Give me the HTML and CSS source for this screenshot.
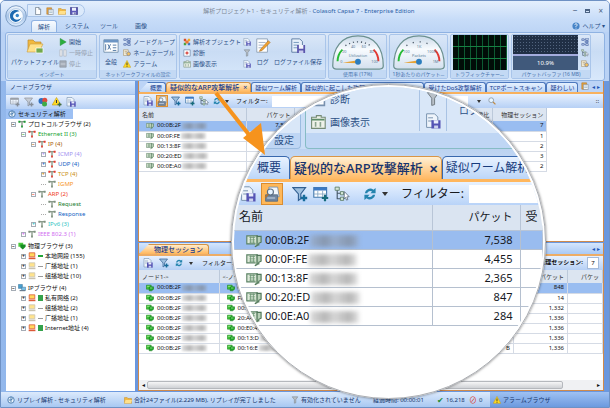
FILE: index.html
```html
<!DOCTYPE html>
<html lang="ja">
<head>
<meta charset="utf-8">
<title>解析プロジェクト1 - セキュリティ解析 - Colasoft Capsa 7</title>
<link rel="stylesheet" href="styles.css">
</head>
<body>
<svg class="defs" aria-hidden="true">
  <defs>
    <linearGradient id="dial" x1="0" y1="0" x2="0" y2="1"><stop offset="0" stop-color="#c9d9e8"/><stop offset=".4" stop-color="#f8fbfe"/><stop offset="1" stop-color="#d3e0ee"/></linearGradient>
    <linearGradient id="orb" x1="0" y1="0" x2="0" y2="1"><stop offset="0" stop-color="#f4f9ff"/><stop offset=".5" stop-color="#a9c6ea"/><stop offset="1" stop-color="#dcecff"/></linearGradient>
  </defs>
  <symbol id="doc" viewBox="0 0 10 10"><path d="M2 .5h4l2.300 2.500v6.500H2z" fill="#fff" stroke="#567" stroke-width=".8"/><path d="M6 .5V3h2.300" fill="none" stroke="#567" stroke-width=".7"/></symbol>
  <symbol id="clip" viewBox="0 0 10 10"><path d="M1 1h6v8H1z" fill="#e8a43c" stroke="#a86a1c" stroke-width=".6"/><path d="M3 3h6v6.500H3z" fill="#f5f8fc" stroke="#678" stroke-width=".6"/><path d="M4 5h4M4 7h4" stroke="#79a" stroke-width=".7"/></symbol>
  <symbol id="folder" viewBox="0 0 10 10"><path d="M.5 2h3.500l1 1.200h4.500v6H.5z" fill="#f2ba45" stroke="#c08824" stroke-width=".6"/><path d="M.5 9.200 2 5h8L8.800 9.200z" fill="#ffe08b"/></symbol>
  <symbol id="save" viewBox="0 0 10 10"><path d="M.5.5h9v9h-9z" fill="#5b58b8" stroke="#35357c" stroke-width=".8"/><path d="M2.500.8h5v4h-5z" fill="#edf1fb"/><path d="M3 6.500h4.500v3H3z" fill="#d5daf0"/><path d="M5.600 7h1.200v2H5.600z" fill="#35357c"/></symbol>
  <symbol id="savedoc" viewBox="0 0 10 10"><path d="M1 .5h5l2 2v6.500H1z" fill="#eef4fb" stroke="#7690ad" stroke-width=".6"/><path d="M2 3h3M2 5h3" stroke="#7690ad" stroke-width=".6"/><path d="M4 4.500h5.700v5.200H4z" fill="#5554b4"/><path d="M5.500 4.500h2.800v2H5.500z" fill="#e9edfb"/><path d="M5.700 7.800h2.500v1.900H5.700z" fill="#cdd3ee"/></symbol>
  <symbol id="find" viewBox="0 0 10 10"><path d="M3 .7h5.500l1 6H4z" fill="#f4f8fc" stroke="#6d88a4" stroke-width=".5"/><path d="M1 5.500h7.500v4H1z" fill="#7186a0" stroke="#52677f" stroke-width=".5"/><path d="M2 7.500h5" stroke="#c9d6e4" stroke-width=".7"/><circle cx="4" cy="3.800" r="1.900" fill="#e6f3ff" stroke="#5d6f82" stroke-width=".7"/><path d="M2.600 5.200.8 7.200" stroke="#b57530" stroke-width="1"/></symbol>
  <symbol id="filteradd" viewBox="0 0 10 10"><path d="M.5 1h8L5.500 5v3L4 9V5z" fill="#9fc0df" stroke="#315f92" stroke-width=".7"/><path d="M7.500 5.500v4M5.500 7.500h4" stroke="#176b9b" stroke-width="1.500"/></symbol>
  <symbol id="filter" viewBox="0 0 10 10"><path d="M1.500 1h7L6 4.500v4L4.200 9V4.500z" fill="#b9c0c7" stroke="#707980" stroke-width=".6"/></symbol>
  <symbol id="gridadd" viewBox="0 0 10 10"><path d="M.5 1h8v6h-8z" fill="#fff" stroke="#4278ad" stroke-width=".7"/><path d="M.5 1h8v1.800h-8z" fill="#3c79c4"/><path d="M3 3v4M6 3v4M.5 5h8" stroke="#7d9fbe" stroke-width=".5"/><path d="M7.500 5.500v4M5.500 7.500h4" stroke="#176b7b" stroke-width="1.400"/></symbol>
  <symbol id="treeico" viewBox="0 0 10 10"><path d="M2 2v6h3M2 4.500h3" fill="none" stroke="#456" stroke-width=".7"/><path d="M.7.7h2.600v2H.7zM4 3.500h2v2H4zM4 7h2v2H4z" fill="#d5e7d8" stroke="#55755e" stroke-width=".5"/><path d="m6.500 3.500 3 3.200-1.500.1.700 1.700-.9.300-.6-1.600-.9.900z" fill="#fff" stroke="#567" stroke-width=".5"/></symbol>
  <symbol id="reload" viewBox="0 0 10 10"><path d="M1.300 4.500A3.800 3.800 0 0 1 7.500 2L9 .8v3.700H5.300L6.500 3.200A2.300 2.300 0 0 0 3 4.500zM8.700 5.500A3.800 3.800 0 0 1 2.500 8L1 9.200V5.500h3.700L3.500 6.800A2.300 2.300 0 0 0 7 5.500z" fill="#2584ae"/></symbol>
  <symbol id="warn" viewBox="0 0 10 10"><path d="M5 .5 9.700 9.200H.3z" fill="#ffda22" stroke="#c49b12" stroke-width=".6"/><path d="M5 3.200v3.200M5 7.200v1.200" stroke="#333" stroke-width="1.100"/></symbol>
  <symbol id="warnadd" viewBox="0 0 10 10"><path d="M4.500.5 9 8H.2z" fill="#ffda22" stroke="#c49b12" stroke-width=".6"/><path d="M4.500 3v3" stroke="#333"/><path d="M7.500 5.500v4M5.500 7.500h4" stroke="#3a6c51" stroke-width="1.300"/></symbol>
  <symbol id="play" viewBox="0 0 10 10"><path d="M1.500.5 9 5 1.500 9.500z" fill="#2cae3c" stroke="#178228" stroke-width=".5"/></symbol>
  <symbol id="pause" viewBox="0 0 10 10"><path d="M1 1h3v8H1zM6 1h3v8H6z" fill="#e6e9ee" stroke="#a8afb8" stroke-width=".7"/></symbol>
  <symbol id="stop" viewBox="0 0 10 10"><path d="M1 1h8v8H1z" fill="#a5adb8" stroke="#848d99" stroke-width=".7"/><path d="M2 5h6" stroke="#d7dce3"/></symbol>
  <symbol id="nodes" viewBox="0 0 10 10"><path d="M1 1h3v2H1zM6 0h3v3H6zM1 7h3v2H1zM6 7h3v2.500H6zM5 4h4v1.500H5z" fill="#d7e3f2" stroke="#3d5da2" stroke-width=".8"/><path d="M4 2h2M4 8h2M7.500 3v4" stroke="#3d5da2" stroke-width=".6"/></symbol>
  <symbol id="nametable" viewBox="0 0 10 10"><path d="M.5 1h6v7h-6z" fill="#f7f2df" stroke="#947541" stroke-width=".6"/><path d="M2 3h3M2 5h3" stroke="#947541" stroke-width=".6"/><circle cx="7" cy="6" r="2.300" fill="#f4c15c" stroke="#6477a8" stroke-width=".8"/></symbol>
  <symbol id="general" viewBox="0 0 18 16"><path d="M1 1h16v14H1z" fill="#fff" stroke="#718fac"/><path d="M1 1h16v3H1z" fill="#6d95c4"/><path d="M3 6v7M5.500 6l3 6M8.500 6l-3 6M11 7h4M11 10h4M11 13h4" stroke="#456e9d"/></symbol>
  <symbol id="bigfolder" viewBox="0 0 18 16"><path d="M2 2h5l2 2h6v8H2z" fill="#f1b93f" stroke="#bd892c" stroke-width=".7"/><path d="m1 14 3-8h13l-4 8z" fill="#ffe18a" stroke="#c99a39" stroke-width=".6"/><path d="M10 10h7v5h-7z" fill="#72a94c" stroke="#fff" stroke-width=".7"/></symbol>
  <symbol id="cubes" viewBox="0 0 10 10"><path d="M1 1h3v3H1z" fill="#d74d2c"/><path d="M6 1h3v3H6z" fill="#f1aa28"/><path d="M1 6h3v3H1z" fill="#44a544"/><path d="M6 6h3v3H6z" fill="#3c78c9"/><path d="M3 3h4v4H3z" fill="#ee7834"/></symbol>
  <symbol id="pie" viewBox="0 0 10 10"><circle cx="3.500" cy="4" r="3" fill="#2f6fc0"/><circle cx="6.800" cy="3.200" r="2.500" fill="#e04a3c"/><circle cx="6.500" cy="7" r="2.500" fill="#3eaa48"/></symbol>
  <symbol id="diag" viewBox="0 0 10 10"><path d="M1 1h8v8H1z" fill="#fff" stroke="#7891ae"/><path d="M5 3v4M3 5h4" stroke="#d02e28" stroke-width="1.500"/></symbol>
  <symbol id="view" viewBox="0 0 10 10"><path d="M1 2h3V1h3v1h2.500v7H1z" fill="#eef2e9" stroke="#758b76" stroke-width=".7"/><path d="M1 3.500h8" stroke="#5d8b68"/><path d="M3 5h1v3H3zM6 5h1v3H6z" fill="#8ba58f"/></symbol>
  <symbol id="log" viewBox="0 0 18 18"><path d="M2 1h12v15H2z" fill="#fff" stroke="#8c9fb4"/><path d="M4 5h8M4 8h6M4 11h5" stroke="#9baac0"/><path d="m6 13 9-10 2 2-9 9-3 1z" fill="#f3a32f" stroke="#a86c20" stroke-width=".7"/></symbol>
  <symbol id="logsave" viewBox="0 0 18 18"><path d="M2 1h9l3 3v12H2z" fill="#e6f0fa" stroke="#59799f"/><path d="M4 5h6M4 8h6M4 11h6" stroke="#6b91b8"/><path d="M8 8h9v9H8z" fill="#5a56ad"/><path d="M10 8h5v4h-5z" fill="#f3f5fb"/><path d="M10 14h5v3h-5z" fill="#cacded"/></symbol>
  <symbol id="card" viewBox="0 0 14 12"><path d="M.7 1.500h9v7h-9z" fill="#dce8d8" stroke="#5b8264"/><path d="M9.700 1v9l-2 1M9.700 2h3.500v5l-2 1v1.500h-2" fill="#b9d0b8" stroke="#4e7557"/><path d="M3 3h5M3 5h5M3 7h5M4 2v6M6.500 2v6" stroke="#6c9674" stroke-width=".7"/></symbol>
  <symbol id="port" viewBox="0 0 10 8"><path d="M.5.500h6v5h-6z" fill="#45c63b" stroke="#14851b" stroke-width=".7"/><path d="M4 2.500h5.500v3L7 7.500H4z" fill="#1fa528" stroke="#117119" stroke-width=".6"/><path d="M1.500 2h3M5 4h3" stroke="#b8f5aa" stroke-width=".8"/></symbol>
  <symbol id="tee" viewBox="0 0 10 10"><path d="M1 2h8M5 2.500V9" fill="none" stroke="#8a9b8b" stroke-width="1.700"/><path d="M.5 1h2.500v2.500H.5zM7 1h2.500v2.500H7zM4 7h2v2.500H4z" fill="currentColor"/></symbol>
  <symbol id="shield" viewBox="0 0 10 10"><path d="M.5 1h6v5h-6z" fill="#48c83b"/><path d="M3 3h6.500v3L6 9.500 3 7z" fill="#168d22"/></symbol>
  <symbol id="pcs" viewBox="0 0 10 10"><path d="M.5.500h5v5h-5z" fill="#49a0cf" stroke="#346b91" stroke-width=".6"/><path d="M4.500 4h5v4h-5z" fill="#7bc1e7" stroke="#346b91" stroke-width=".6"/><path d="M2 7.500h7v1.500H2z" fill="#6a7d91"/></symbol>
  <symbol id="host" viewBox="0 0 10 10"><path d="M1.500 1h7v5h-7z" fill="#ffd85d" stroke="currentColor"/><path d="M.8 7h8.500v2H.8z" fill="currentColor"/></symbol>
  <symbol id="globe" viewBox="0 0 10 10"><circle cx="5" cy="5" r="4" fill="#edf5fc" stroke="#356ca4"/><path d="M5 1v4l2.500-2M2 5h3v3" fill="none" stroke="#356ca4"/></symbol>
  <symbol id="ask" viewBox="0 0 10 10"><circle cx="5" cy="5" r="4.500" fill="#4684c8"/><path d="M3.500 3.800C3.500 1.500 7 2 6.500 4L5 5.500v.8M5 7.200v1" fill="none" stroke="#fff" stroke-width="1.100"/></symbol>
  <symbol id="lens" viewBox="0 0 10 10"><circle cx="4" cy="4" r="3" fill="#e9f6ff" stroke="#8b9bab" stroke-width="1.100"/><path d="m6.300 6.300 3 3" stroke="#c08c45" stroke-width="1.500"/></symbol>
</svg>

<div class="window">
  <header class="top">
    <button class="orb" aria-label="メニュー"><svg viewBox="0 0 22 22"><circle cx="11" cy="11" r="10.300" fill="url(#orb)" stroke="#7f9fc5"/><circle cx="11" cy="11" r="7.300" fill="#f7fbff" stroke="#9bb7d8" stroke-width=".7"/><path d="M14.500 6.200A6 6 0 1 0 16.700 12c-1.500 3.200-6.800 3.800-8.200.8C7 9.500 10 6.600 14.500 6.200z" fill="#1d69b1"/><circle cx="12.300" cy="10.500" r="1.700" fill="#3483c7"/></svg></button>
    <div class="titlebar">
      <div class="quick">
        <button aria-label="新規"><svg><use href="#doc"/></svg></button>
        <button aria-label="貼り付け"><svg><use href="#clip"/></svg></button>
        <button aria-label="開く"><svg><use href="#folder"/></svg></button>
        <button aria-label="保存"><svg><use href="#save"/></svg></button>
      </div>
      <h1><span>解析プロジェクト1 - セキュリティ解析 -</span> Colasoft Capsa 7 - Enterprise Edition</h1>
      <div class="winbtns"><button aria-label="最小化">‒</button><button aria-label="最大化"><i></i></button><button aria-label="閉じる">×</button></div>
    </div>
    <nav class="menu">
      <button class="on">解析</button><button>システム</button><button>ツール</button><button>画像</button>
      <button class="help"><svg class="i8"><use href="#ask"/></svg>ヘルプ ▾</button>
    </nav>
  </header>

  <section class="ribbon">
    <div class="group import">
      <div class="body">
        <button class="big"><svg><use href="#bigfolder"/></svg>パケットファイル</button>
        <div class="stack">
          <button><svg class="i8"><use href="#play"/></svg>開始</button>
          <button disabled><svg class="i8"><use href="#pause"/></svg>一時停止</button>
          <button disabled><svg class="i8"><use href="#stop"/></svg>停止</button>
        </div>
      </div>
      <h2>インポート</h2>
    </div>
    <div class="group setting">
      <div class="body">
        <button class="big"><svg><use href="#general"/></svg>全般</button>
        <div class="stack">
          <button><svg class="i8"><use href="#nodes"/></svg>ノードグループ</button>
          <button><svg class="i8"><use href="#nametable"/></svg>ネームテーブル</button>
          <button><svg class="i8"><use href="#warn"/></svg>アラーム</button>
        </div>
      </div>
      <h2>ネットワークファイルの設定</h2>
    </div>
    <div class="group analysis">
      <div class="body">
        <div class="stack wide">
          <button><svg class="i8"><use href="#cubes"/></svg>解析オブジェクト</button>
          <button><svg class="i8"><use href="#diag"/></svg>診断</button>
          <button><svg class="i8"><use href="#view"/></svg>画像表示</button>
        </div>
        <div class="stack icons">
          <button aria-label="パケット保存"><svg class="i8"><use href="#savedoc"/></svg></button>
          <button aria-label="フィルター"><svg class="i8"><use href="#filter"/></svg></button>
          <button aria-label="保存"><svg class="i8"><use href="#savedoc"/></svg></button>
        </div>
        <button class="big"><svg><use href="#log"/></svg>ログ</button>
        <button class="big"><svg><use href="#logsave"/></svg>ログファイル保存</button>
      </div>
      <h2>&nbsp;</h2>
    </div>
    <div class="group meter">
      <svg viewBox="0 0 54 36" class="dial"><path d="M1 32C1 13 10 1 27 1s26 12 26 31q0 3-4 3H5q-4 0-4-3z" fill="url(#dial)" stroke="#6c9190" stroke-width="1.300"/><path d="M6 27q0-7 5-12" fill="none" stroke="#28bb36" stroke-width="2"/><path d="M43 15q5 5 5 12" fill="none" stroke="#e13b35" stroke-width="2"/><path d="M14 11q13-8 26 0" fill="none" stroke="#4a5968" stroke-width="1.400" stroke-dasharray="1.200 3"/><text x="27" y="23">Utilization</text><text x="22" y="13">40</text><text x="33" y="13">60</text><text x="13" y="19">20</text><text x="41" y="19">80</text><text x="10" y="29">0</text><text x="44" y="29">100</text><path d="M11 28.500 27 26v3z" fill="#e6a335"/><circle cx="27" cy="27.500" r="3" fill="#2c7dbd"/></svg>
      <h2>使用率 (17%)</h2>
    </div>
    <div class="group meter">
      <svg viewBox="0 0 54 36" class="dial"><path d="M1 32C1 13 10 1 27 1s26 12 26 31q0 3-4 3H5q-4 0-4-3z" fill="url(#dial)" stroke="#6c9190" stroke-width="1.300"/><path d="M6 27q0-7 5-12" fill="none" stroke="#28bb36" stroke-width="2"/><path d="M43 15q5 5 5 12" fill="none" stroke="#e13b35" stroke-width="2"/><path d="M14 11q13-8 26 0" fill="none" stroke="#4a5968" stroke-width="1.400" stroke-dasharray="1.200 6"/><text x="27" y="23">Packets</text><text x="27" y="13">1K</text><text x="14" y="19">100</text><text x="40" y="19">100K</text><text x="44" y="29">1M</text><path d="M11 28.500 27 26v3z" fill="#e6a335"/><circle cx="27" cy="27.500" r="3" fill="#2c7dbd"/></svg>
      <h2>1秒あたりのパケット...</h2>
    </div>
    <div class="group meter"><div class="traffic"></div><h2>トラフィックチャー...</h2></div>
    <div class="group buffer">
      <div class="body"><div class="level"><div class="dots"></div><div class="pct">10.9%</div></div>
        <div class="stack icons">
          <button aria-label="バッファ保存"><svg class="i8"><use href="#nodes"/></svg></button>
          <button aria-label="バッファ消去"><svg class="i8"><use href="#treeico"/></svg></button>
          <button aria-label="バッファ固定"><svg class="i8"><use href="#nametable"/></svg></button>
        </div>
      </div>
      <h2>パケットバッファ (16 MB)</h2>
    </div>
  </section>

  <div class="work">
    <aside class="side">
      <h2 class="sidehead">ノードブラウザ</h2>
      <div class="bar">
        <button disabled aria-label="表示"><svg class="i10"><use href="#gridadd"/></svg></button>
        <button disabled aria-label="フィルター"><svg class="i10"><use href="#filteradd"/></svg></button>
        <button aria-label="グラフ"><svg class="i10"><use href="#pie"/></svg></button>
        <button aria-label="アラーム"><svg class="i10"><use href="#warnadd"/></svg></button>
        <button aria-label="レポート"><svg class="i10"><use href="#savedoc"/></svg></button>
      </div>
      <ul class="tree">
        <li class="sel"><svg class="i8"><use href="#globe"/></svg>セキュリティ解析</li>
        <li class="l1 g"><b>−</b><svg class="i8"><use href="#tee"/></svg>プロトコルブラウザ (2)</li>
        <li class="l2 r green"><b>−</b><svg class="i8"><use href="#tee"/></svg>Ethernet II (3)</li>
        <li class="l3 r brown"><b>−</b><svg class="i8"><use href="#tee"/></svg>IP (4)</li>
        <li class="l4 r lilac"><b>+</b><svg class="i8"><use href="#tee"/></svg>ICMP (4)</li>
        <li class="l4 r blue"><b>+</b><svg class="i8"><use href="#tee"/></svg>UDP (4)</li>
        <li class="l4 r amber"><b>+</b><svg class="i8"><use href="#tee"/></svg>TCP (4)</li>
        <li class="l4 orange"><b class="leaf"></b><svg class="i8"><use href="#tee"/></svg>IGMP</li>
        <li class="l3 red"><b>−</b><svg class="i8"><use href="#tee"/></svg>ARP (2)</li>
        <li class="l4 dgreen"><b class="leaf"></b><svg class="i8"><use href="#tee"/></svg>Request</li>
        <li class="l4 blue"><b class="leaf"></b><svg class="i8"><use href="#tee"/></svg>Response</li>
        <li class="l3 cyan"><b>+</b><svg class="i8"><use href="#tee"/></svg>IPv6 (3)</li>
        <li class="l2 pink"><b>+</b><svg class="i8"><use href="#tee"/></svg>IEEE 802.3 (1)</li>
        <li class="l1 first"><b>−</b><svg class="i8"><use href="#shield"/></svg>物理ブラウザ (3)</li>
        <li class="l2 hot"><b>+</b><svg class="i8"><use href="#host"/></svg><i class="dash on"></i>本地网段 (155)</li>
        <li class="l2 dim"><b>+</b><svg class="i8"><use href="#host"/></svg><i class="dash"></i>广播地址 (1)</li>
        <li class="l2 dim"><b>+</b><svg class="i8"><use href="#host"/></svg><i class="dash"></i>组播地址 (10)</li>
        <li class="l1 first"><b>−</b><svg class="i8"><use href="#pcs"/></svg>IPブラウザ (4)</li>
        <li class="l2 hot"><b>+</b><svg class="i8"><use href="#host"/></svg><i class="dash tall"></i>私有网络 (2)</li>
        <li class="l2 dim"><b>+</b><svg class="i8"><use href="#host"/></svg><i class="dash"></i>组播地址 (2)</li>
        <li class="l2 dim"><b>+</b><svg class="i8"><use href="#host"/></svg><i class="dash"></i>广播地址 (1)</li>
        <li class="l2 hot"><b>+</b><svg class="i8"><use href="#host"/></svg><i class="dash tall"></i>Internet地址 (4)</li>
      </ul>
    </aside>

    <main class="main">
      <section class="panel upper">
        <div class="tabs">
          <button class="first">概要</button><button class="on">疑似的なARP攻撃解析 <span>×</span></button><button>疑似ワーム解析</button><button class="grow">疑似的に起こした攻撃</button><button>受けたDoS攻撃解析</button><button>TCPポートスキャン</button><button>疑わしい</button>
          <span class="more"><svg class="i8"><use href="#clip"/></svg>◂ ▸</span>
        </div>
        <div class="bar">
          <button aria-label="保存"><svg class="i10"><use href="#savedoc"/></svg></button>
          <button class="hit" aria-label="検索"><svg class="i10"><use href="#find"/></svg></button>
          <button aria-label="フィルター追加"><svg class="i10"><use href="#filteradd"/></svg></button>
          <button aria-label="列追加"><svg class="i10"><use href="#gridadd"/></svg></button>
          <button aria-label="ツリー"><svg class="i10"><use href="#treeico"/></svg></button>
          <button aria-label="更新"><svg class="i8"><use href="#reload"/></svg></button><i class="caret"></i>
          <label for="f1">フィルター:</label><input id="f1" type="text"><i class="caret"></i>
          <svg class="i8"><use href="#lens"/></svg><span class="end">::</span>
        </div>
        <table class="list hosts">
          <colgroup><col class="c-name"><col class="c-pk"><col><col class="c-ses"></colgroup>
          <thead><tr><th>名前</th><th class="n">パケット</th><th class="n">受信比</th><th class="n">物理セッション</th></tr></thead>
          <tbody>
            <tr class="pick"><td><svg class="i8"><use href="#card"/></svg>00:0B:2F<i class="mask"></i></td><td class="n">7,538</td><td></td><td class="n">7</td></tr>
            <tr><td><svg class="i8"><use href="#card"/></svg>00:0F:FE<i class="mask"></i></td><td></td><td></td><td class="n">1</td></tr>
            <tr><td><svg class="i8"><use href="#card"/></svg>00:13:8F<i class="mask"></i></td><td></td><td></td><td class="n">2</td></tr>
            <tr><td><svg class="i8"><use href="#card"/></svg>00:20:ED<i class="mask"></i></td><td></td><td></td><td class="n">3</td></tr>
            <tr><td><svg class="i8"><use href="#card"/></svg>00:0E:A0<i class="mask"></i></td><td></td><td></td><td class="n">2</td></tr>
          </tbody>
        </table>
      </section>

      <section class="panel lower">
        <div class="tabs"><button class="on">物理セッション</button><span class="more">◂ ▸</span></div>
        <div class="bar">
          <button aria-label="保存"><svg class="i10"><use href="#savedoc"/></svg></button>
          <button aria-label="フィルター追加"><svg class="i10"><use href="#filteradd"/></svg></button>
          <button aria-label="更新"><svg class="i8"><use href="#reload"/></svg></button><i class="caret"></i>
          <label for="f2">フィルター:</label><input id="f2" type="text">
          <strong class="count">物理セッション: <span>7</span></strong>
        </div>
        <table class="list">
          <colgroup><col class="c-node"><col><col class="c-pk2"><col class="c-last"></colgroup>
          <thead><tr><th>ノード1-&gt;</th><th>&lt;-ノード2</th><th class="n">パケット</th><th class="n">パケッ</th></tr></thead>
          <tbody>
            <tr class="pick"><td><svg class="i8"><use href="#port"/></svg>00:0B:2F<i class="mask"></i></td><td><svg class="i8"><use href="#port"/></svg>00:0F</td><td class="n">848</td><td></td></tr>
            <tr><td><svg class="i8"><use href="#port"/></svg>00:0B:2F<i class="mask"></i></td><td><svg class="i8"><use href="#port"/></svg>FF:FF</td><td class="n">14</td><td></td></tr>
            <tr><td><svg class="i8"><use href="#port"/></svg>00:0B:2F<i class="mask"></i></td><td><svg class="i8"><use href="#port"/></svg>00:13</td><td class="n">1,332</td><td></td></tr>
            <tr><td><svg class="i8"><use href="#port"/></svg>00:0B:2F<i class="mask"></i></td><td><svg class="i8"><use href="#port"/></svg>20:A4</td><td class="n">1,336</td><td></td></tr>
            <tr><td><svg class="i8"><use href="#port"/></svg>00:0B:2F<i class="mask"></i></td><td><svg class="i8"><use href="#port"/></svg>00:E0:4C</td><td class="n">1,336</td><td></td></tr>
            <tr><td><svg class="i8"><use href="#port"/></svg>00:0B:2F<i class="mask"></i></td><td><svg class="i8"><use href="#port"/></svg>00:13:D<i class="mask"></i></td><td class="n">1,336</td><td></td></tr>
            <tr><td><svg class="i8"><use href="#port"/></svg>00:0B:2F<i class="mask"></i></td><td><svg class="i8"><use href="#port"/></svg>00:16:E<i class="mask"></i><span class="unit">B</span></td><td class="n">1,336</td><td></td></tr>
          </tbody>
        </table>
        <div class="scroll"><span>◂</span><i></i><span>▸</span></div>
      </section>
    </main>
  </div>

  <footer class="status">
    <span class="s1"><svg class="i8"><use href="#globe"/></svg>リプレイ解析 - セキュリティ解析</span>
    <span class="s2"><svg class="i8"><use href="#folder"/></svg>合計24ファイル(2.229 MB), リプレイが完了しました</span>
    <span class="s3"><svg class="i8"><use href="#filter"/></svg>有効化されていません</span>
    <span class="s4">経過時間: 00:00:01</span>
    <span class="s5"><em class="ok">✔</em>16,218</span>
    <span class="s6"><em class="no">⊘</em>0</span>
    <span class="s7"><svg class="i8"><use href="#warn"/></svg>アラームブラウザ</span>
  </footer>

  <div class="loupe">
    <div class="z-ribbon">
      <div class="z-group left">設定</div>
      <div class="z-group right">
        <div class="z-items"><span><svg><use href="#diag"/></svg>診断</span><span><svg><use href="#view"/></svg>画像表示</span></div>
        <div class="z-icons"><svg><use href="#filter"/></svg><svg><use href="#savedoc"/></svg></div>
        <span class="z-log">ログ</span>
      </div>
    </div>
    <div class="z-tabs"><span class="first">概要</span><span class="on">疑似的なARP攻撃解析<b>✕</b></span><span>疑似ワーム解析</span></div>
    <div class="z-bar">
      <svg><use href="#savedoc"/></svg><span class="hit"><svg><use href="#find"/></svg></span>
      <svg><use href="#filteradd"/></svg><svg><use href="#gridadd"/></svg><svg><use href="#treeico"/></svg>
      <svg class="re"><use href="#reload"/></svg><i class="caret"></i>
      <label for="f3">フィルター:</label><input id="f3" type="text">
    </div>
    <table>
      <colgroup><col class="z-name"><col class="z-pk"><col></colgroup>
      <thead><tr><th>名前</th><th class="n">パケット</th><th class="rx">受</th></tr></thead>
      <tbody>
        <tr class="pick"><td><svg><use href="#card"/></svg>00:0B:2F<i class="mask"></i></td><td class="n">7,538</td><td></td></tr>
        <tr><td><svg><use href="#card"/></svg>00:0F:FE<i class="mask"></i></td><td class="n">4,455</td><td></td></tr>
        <tr><td><svg><use href="#card"/></svg>00:13:8F<i class="mask"></i></td><td class="n">2,365</td><td></td></tr>
        <tr><td><svg><use href="#card"/></svg>00:20:ED<i class="mask"></i></td><td class="n">847</td><td></td></tr>
        <tr><td><svg><use href="#card"/></svg>00:0E:A0<i class="mask"></i></td><td class="n">284</td><td></td></tr>
      </tbody>
    </table>
  </div>
  <svg class="arrow" viewBox="0 0 52 66" aria-hidden="true"><path d="m2 2 34 43" stroke="#f6931d" stroke-width="4"/><path d="M51 64 29 47l18-15z" fill="#f6931d"/></svg>
</div>
</body>
</html>
```

FILE: styles.css
```css
* { box-sizing: border-box; }

:root {
  --ink: #17376e;
  --line: #8fb2e2;
  --orange: #cf8a4c;
}

body {
  margin: 0;
  font: 6px/10px "Noto Sans", "Noto Sans CJK JP", sans-serif;
  color: #111;
}

button, input {
  font: inherit;
  color: inherit;
  border: 0;
  padding: 0;
  margin: 0;
  background: none;
}

h1, h2, ul { margin: 0; padding: 0; font-size: 6px; font-weight: 400; }
table { border-collapse: collapse; table-layout: fixed; width: 100%; }
th { font-weight: 400; text-align: left; }
i, em { font-style: normal; }
svg { flex: none; }
.n { text-align: right; }
.defs { position: absolute; width: 0; height: 0; }
.i8 { width: 8px; height: 8px; }
.i10 { width: 10px; height: 10px; }

.window {
  position: relative;
  min-height: 100vh;
  display: flex;
  flex-direction: column;
  overflow: hidden;
  border: 1px solid #6e91c4;
  border-radius: 5px 5px 0 0;
  background: #b9d2f5;
}

/* title and menu */
.top {
  display: grid;
  grid-template-columns: 26px 1fr;
  grid-template-rows: 19px 12px;
  background: linear-gradient(#e4effd, #c7dcf8 60%, #bdd5f5);
}
.orb { grid-row: 1 / 3; padding: 4px 0 0 4px; display: flex; }
.orb svg { width: 22px; height: 22px; }
.titlebar { display: flex; align-items: center; color: #2c5ea8; }
.quick {
  display: flex;
  gap: 4px;
  height: 13px;
  padding: 2px 6px;
  border: 1px solid #a9c4e8;
  border-radius: 0 7px 7px 0;
  background: #dceafb;
}
.quick button { display: flex; }
.quick svg { width: 8px; height: 8px; }
.titlebar h1 { flex: 1; text-align: center; padding-right: 40px; }
.titlebar h1 span { color: #7b8796; }
.winbtns { display: flex; gap: 8px; padding-right: 6px; align-items: center; color: #4c6383; font-size: 8px; }
.winbtns i { display: block; width: 5px; height: 4px; border: 1px solid #4c6383; border-top-width: 2px; }
.menu { display: flex; align-items: stretch; padding-left: 4px; color: #294f87; }
.menu button { min-width: 32px; padding: 0 3px; }
.menu .on {
  min-width: 26px;
  margin: 0 4px 0 0;
  background: linear-gradient(#f8fbff, #dce9f8);
  border: 1px solid #8fb2e2;
  border-bottom: 0;
  border-radius: 3px 3px 0 0;
}
.menu .help { margin-left: auto; display: flex; align-items: center; gap: 2px; padding-right: 4px; }

/* ribbon */
.ribbon {
  display: flex;
  gap: 2px;
  height: 49px;
  margin: 0 4px;
  padding: 1px 0 1px 1px;
  border: 1px solid var(--line);
  border-radius: 3px;
  background: linear-gradient(#dce8f8, #c9dcf4 40%, #d8e8fb);
}
.group {
  display: flex;
  flex-direction: column;
  justify-content: space-between;
  border: 1px solid #a9c5ea;
  border-radius: 2px;
  overflow: hidden;
  color: #2d5187;
}
.group h2 { text-align: center; font-size: 5px; line-height: 8px; color: #4570ac; background: #c3d9f4; white-space: nowrap; }
.group .body { display: flex; flex: 1; justify-content: space-between; align-items: center; padding: 0 3px; }
.import { flex: 0 0 90px; }
.setting { flex: 0 0 78px; }
.analysis { flex: 0 0 147px; }
.meter { flex: 0 0 59px; align-items: center; }
.meter h2 { align-self: stretch; }
.buffer { flex: 0 0 80px; }
.big { display: flex; flex-direction: column; align-items: center; gap: 3px; white-space: nowrap; }
.big svg { width: 18px; height: 16px; }
.setting .big svg { width: 16px; }
.stack { display: flex; flex-direction: column; }
.stack button { display: flex; align-items: center; gap: 2px; height: 11px; white-space: nowrap; }
.stack button:disabled { color: #9aa5b4; }
.setting .body { padding: 0 1px 0 3px; }
.dial { width: 54px; height: 35px; }
.dial text { font-size: 4px; text-anchor: middle; fill: #5d7f9a; }
.traffic {
  width: 54px;
  height: 35px;
  background:
    repeating-linear-gradient(#0000 0 11px, #168043 11px 12px),
    repeating-linear-gradient(90deg, #0000 0 5px, #0c5a32 5px 6px),
    #010d08;
}
.level { width: 65px; height: 35px; display: flex; flex-direction: column; background: #40597b; }
.dots {
  flex: 0 0 21px;
  border-bottom: 2px solid #a4acde;
  background: radial-gradient(#52647e 1px, #0000 1px) 0 0 / 3px 3px, #202f45;
}
.pct { flex: 1; display: grid; place-items: center; color: #fff; }
.buffer .body { padding: 0 1px; }

/* work area */
.work {
  flex: 1;
  display: grid;
  grid-template-columns: 129px 1fr;
  gap: 3px;
  padding: 0 5px 1px;
  background: linear-gradient(90deg, #93b8ec, #6a97de 20%, #6a97de);
}
.side { background: #fff; }
.sidehead { height: 14px; line-height: 13px; padding-left: 4px; color: var(--ink); background: linear-gradient(#d8e8fc, #b5d0f5); border-bottom: 1px solid #9fc0ee; }
.bar { display: flex; align-items: center; height: 14px; gap: 4px; padding: 0 4px; background: linear-gradient(#e8f1fe, #b6d0f5); }
.bar button { display: flex; }
.bar button:disabled { filter: grayscale(1); opacity: .6; }
.bar .hit { background: #ffbf69; outline: 1px solid #d98f37; }
.caret { border: 2px solid #0000; border-top: 3px solid #333; border-bottom: 0; margin: 0 3px 0 0; }
.bar input { width: 26px; height: 11px; background: #fff; }

.tree { list-style: none; }
.tree li { display: flex; align-items: center; gap: 2px; height: 10px; white-space: nowrap; color: #111; }
.tree svg { color: #7f917f; }
.tree b { width: 5px; height: 5px; border: 1px solid #a5acb5; font-size: 5px; line-height: 2px; text-align: center; }
.tree .leaf { border: 0; border-top: 1px dotted #aaa; height: 1px; }
.tree .sel { width: 67px; padding-left: 2px; background: #9dc0f3; }
.tree .l1 { padding-left: 5px; }
.tree .l2 { padding-left: 15px; }
.tree .l3 { padding-left: 25px; }
.tree .l4 { padding-left: 35px; }
.tree .l1.g svg { color: #1d9a35; }
.tree .first { margin-top: 2px; }
.tree .r svg { color: #e8392c; }
.tree .green { color: #1aa332; }
.tree .brown { color: #a85d0c; }
.tree .lilac { color: #a493f0; }
.tree .blue { color: #1463c4; }
.tree .amber { color: #c98c0c; }
.tree .orange { color: #f7982c; }
.tree .red { color: #ef3b24; }
.tree .dgreen { color: #1c7c30; }
.tree .cyan { color: #2fc4c4; }
.tree .pink { color: #d06cf0; }
.tree .hot svg { color: #dc5938; }
.tree .dim svg { color: #b2a990; opacity: .7; }
.dash { width: 5px; height: 1px; background: #999; }
.dash.on { height: 2px; background: #22a637; }
.dash.tall { height: 6px; background: #34a24b; }

.main { display: grid; grid-template-rows: 161px 1fr; gap: 1px; min-width: 0; }
.panel { display: flex; flex-direction: column; min-width: 0; background: #fff; border: 1px solid var(--orange); border-top: 0; }
.tabs { display: flex; align-items: flex-end; height: 13px; background: #bcd4f6; border-bottom: 2px solid #f7b15e; }
.tabs button {
  height: 10px;
  padding: 0 3px;
  white-space: nowrap;
  overflow: hidden;
  color: #173b8d;
  border: 1px solid #4c78bd;
  border-bottom: 0;
  border-radius: 3px 3px 0 0;
  background: linear-gradient(#e5f0fe, #bcd5f7);
}
.tabs .first { padding-left: 10px; clip-path: polygon(9px 0, 100% 0, 100% 100%, 0 100%); }
.tabs .on { font-size: 7px; font-weight: 500; background: linear-gradient(#ffeccb, #ffb65c); border-color: #d49346; }
.tabs .on span { margin-left: 2px; }
.tabs .grow { flex: 1; text-align: left; }
.more { display: flex; gap: 3px; margin-left: auto; padding: 0 3px; color: #1c55b5; }
.lower .tabs { background: linear-gradient(#d5e6fd, #a9c9f5); border-bottom-color: #edac65; }
.lower .tabs .on { font-size: 7px; padding: 0 5px 0 14px; clip-path: polygon(10px 0, 100% 0, 100% 100%, 0 100%); }
.upper .bar input { flex: 1; }
.upper .bar input + .caret { margin-left: 5px; }
.upper .end { margin-left: 96px; }
.lower .bar { gap: 6px; }
.count { margin-left: auto; display: flex; gap: 4px; }
.count span { width: 12px; text-align: center; font-weight: 400; background: #fff; border: 1px solid #a5bbda; }

.list th { height: 13px; padding: 0 3px; color: #333; background: #dce5f1; border-right: 1px solid #bcc9da; white-space: nowrap; overflow: hidden; }
.list td { height: 10px; padding: 0 3px; line-height: 9px; border-right: 1px solid #d5dbe5; border-bottom: 1px solid #d5dbe5; white-space: nowrap; overflow: hidden; }
.list td svg { vertical-align: middle; margin: 0 3px 0 4px; }
.list .pick { background: #99bdf1; }
.list.hosts { width: 88%; }
.c-name { width: 107px; }
.c-pk { width: 48px; }
.c-ses { width: 54px; }
.c-node { width: 80px; }
.c-pk2 { width: 54px; }
.c-last { width: 35px; }
.unit { float: right; }
.mask {
  display: inline-block;
  vertical-align: middle;
  width: 25px;
  height: 6px;
  margin-left: 1px;
  background: linear-gradient(90deg, #9995, #7778 30%, #9996 50%, #7778 80%, #9994);
  filter: blur(1px);
}
.scroll { margin-top: auto; display: flex; height: 10px; align-items: center; gap: 2px; padding: 0 3px; background: #f0f1f3; }
.scroll i { flex: 1; height: 8px; border: 1px solid #b5b8bd; border-radius: 2px; background: linear-gradient(#f6f6f7, #cfd1d5); }
.scroll span:last-child { margin-left: 32px; }

/* status */
.status {
  display: flex;
  align-items: center;
  height: 15px;
  padding: 0 6px;
  color: var(--ink);
  background: linear-gradient(#dceafc, #a8c8f2);
}
.status span { display: flex; align-items: center; gap: 2px; white-space: nowrap; }
.s1 { flex: 0 0 117px; }
.s2 { flex: 0 0 167px; }
.s3 { flex: 0 0 82px; }
.s4 { flex: 0 0 64px; }
.s5 { flex: 0 0 32px; }
.s6 { flex: 0 0 21px; }
.s7 { flex: 1; align-self: stretch; margin-right: -6px; padding-left: 3px; background: linear-gradient(#9fc1f2, #6c9adf); }
.ok { color: #1f8b35; font-size: 8px; }
.no { color: #dc3b2b; font-size: 8px; }

/* magnifier over the window */
.loupe {
  position: absolute;
  left: 230px;
  top: 83px;
  width: 315px;
  height: 315px;
  border: 3px solid #fff;
  border-radius: 50%;
  overflow: hidden;
  background: #fff;
  outline: 1px solid #a9acb1;
  outline-offset: -1px;
  box-shadow: 0 0 3px #0009;
  color: #16191f;
  font-size: 11px;
  line-height: 18px;
}
.loupe svg { width: 16px; height: 16px; }
.z-ribbon { display: flex; gap: 4px; height: 62px; background: #c9ddf6; color: #2b4f85; font-size: 10px; }
.z-group { border: 1px solid #9bbce0; border-top: 0; border-radius: 0 0 4px 4px; background: linear-gradient(#d9e7f8 46px, #bfd6f4 46px); }
.z-group.left { flex: 0 0 67px; padding: 44px 6px 0 0; text-align: right; }
.z-group.right { flex: 1; display: flex; border-color: #86bcc4; }
.z-items { flex: 0 0 113px; padding: 0 0 0 4px; }
.z-items span { display: flex; gap: 4px; height: 23px; align-items: center; }
.z-icons { display: flex; flex-direction: column; gap: 6px; height: 44px; padding: 4px 5px 0; border: 1px solid #a9c3e4; border-width: 0 1px; }
.z-log { padding: 14px 12px 0; }
.z-tabs { display: flex; align-items: flex-end; height: 33px; font-size: 12px; color: #173b7c; background: linear-gradient(#bcd3f1, #c9ddf8); border-bottom: 3px solid #ffb75e; }
.z-tabs span { height: 23px; line-height: 22px; padding: 0 3px; border: 1px solid #3868ad; border-bottom: 0; border-radius: 5px 5px 0 0; white-space: nowrap; background: linear-gradient(#e8f2ff, #bcd6f8); }
.z-tabs .first { padding: 0 8px 0 22px; }
.z-tabs .on { font-size: 13px; font-weight: 500; border-color: #d99546; background: linear-gradient(#fff0d5, #ffb964); color: #16336d; }
.z-tabs b { margin-left: 6px; font-size: 11px; }
.z-bar { display: flex; align-items: center; gap: 5px; height: 23px; padding-left: 6px; background: linear-gradient(#e8f2ff, #b8d3f8); font-size: 12px; }
.z-bar .hit { display: flex; padding: 2px; background: #ffb859; border: 1px solid #d98c30; margin-right: 4px; }
.z-bar .re { margin-left: 8px; width: 14px; }
.z-bar .caret { border-width: 4px 3px 0; margin-right: 8px; }
.z-bar label { white-space: nowrap; }
.z-bar input { flex: 1; min-width: 0; height: 18px; background: #fff; }
.loupe th { height: 25px; padding: 0 7px 0 5px; background: #dae4f1; border-right: 1px solid #b8c5d7; border-bottom: 1px solid #b8c5d7; font-size: 12px; white-space: nowrap; }
.loupe td { height: 19px; padding: 0 7px 0 12px; border-right: 1px solid #b5c0cf; border-bottom: 1px solid #b5c0cf; white-space: nowrap; }
.loupe .n { font-size: 11px; }
.loupe .pick { background: #99bcef; }
.loupe td svg { width: 16px; height: 14px; vertical-align: middle; margin-right: 3px; }
.loupe .mask { width: 49px; height: 12px; filter: blur(2px); }
.z-name { width: 198px; }
.z-pk { width: 88px; }

.arrow { position: absolute; left: 213px; top: 90px; width: 52px; height: 66px; }
```
